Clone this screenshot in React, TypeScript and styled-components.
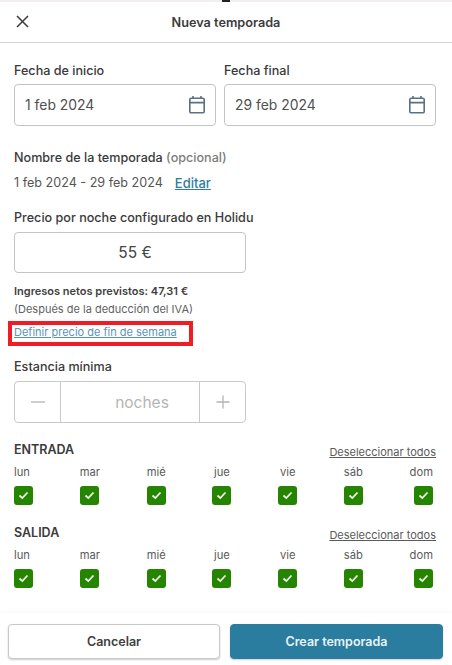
import React, { FC } from 'react';
import styled, { createGlobalStyle } from 'styled-components';

const GlobalStyle = createGlobalStyle`
  html, body {
    margin: 0;
    padding: 0;
    background: #fff;
    font-family: Inter, "Liberation Sans", sans-serif;
    color: #3b3b3b;
  }
  * { box-sizing: border-box; }
`;

const Page = styled.div`
  position: relative;
  width: 452px;
  height: 665px;
  overflow: hidden;
  display: flex;
  flex-direction: column;
`;

const TopStrip = styled.div`
  height: 2px;
  background: #f3eeee;
  display: flex;
  justify-content: center;
  & > span {
    width: 8px;
    height: 2px;
    margin-right: 1px;
    background: #222;
  }
`;

const Header = styled.header`
  position: relative;
  height: 41px;
  flex: none;
  display: flex;
  align-items: center;
  justify-content: center;
  border-bottom: 1px solid #d4d4d4;
  font-size: 12.7px;
  font-weight: 600;
  color: #3c3c3c;
  & > svg {
    position: absolute;
    left: 15px;
    top: 12px;
  }
`;

const Body = styled.main`
  flex: 1;
  padding: 20px 16px 0 14px;
`;

const DateRow = styled.div`
  display: flex;
  gap: 8px;
`;

const DateField = styled.div<{ $width: number }>`
  width: ${(p) => p.$width}px;
`;

const Label = styled.div`
  font-size: 12.6px;
  font-weight: 500;
  line-height: 16px;
  color: #3a3a3a;
`;

const DateBox = styled.div`
  margin-top: 5px;
  height: 42px;
  border: 1px solid #c4c4c4;
  border-radius: 4px;
  padding: 0 9px 0 10px;
  display: flex;
  align-items: center;
  justify-content: space-between;
  font-size: 13.9px;
  color: #4f4f4f;
`;

const NameBlock = styled.section`
  margin-top: 24px;
`;

const Muted = styled.span`
  color: #7d7d7d;
`;

const NameRow = styled.div`
  margin-top: 9px;
  display: flex;
  gap: 12px;
  font-size: 12.6px;
  line-height: 16px;
  color: #555;
`;

const EditLink = styled.a`
  color: #2a7d9f;
  font-size: 13px;
  font-weight: 500;
  text-decoration: underline;
`;

const PriceBlock = styled.section`
  margin-top: 19px;
`;

const PriceBox = styled.div`
  margin-top: 6px;
  width: 232px;
  height: 41px;
  border: 1px solid #c4c4c4;
  border-radius: 4px;
  padding-left: 10px;
  display: flex;
  align-items: center;
  justify-content: center;
  font-size: 15.5px;
  color: #444;
`;

const NetIncome = styled.div`
  margin-top: 11px;
  font-size: 11px;
  font-weight: 600;
  line-height: 14px;
  color: #3f3f3f;
`;

const TaxNote = styled.div`
  margin-top: 4px;
  font-size: 11px;
  line-height: 14px;
  color: #5f5f5f;
`;

const Highlight = styled.div`
  margin: 5px 0 0 -6px;
  width: 185px;
  height: 25px;
  border: 4px solid #ee1c25;
  padding-left: 2px;
  font-size: 11px;
  line-height: 15px;
`;

const WeekendLink = styled.a`
  color: #5b94b3;
  text-decoration: underline;
`;

const StayBlock = styled.section`
  margin-top: 13px;
`;

const Stepper = styled.div`
  margin-top: 6px;
  width: 232px;
  height: 42px;
  border: 1px solid #c9c9c9;
  border-radius: 4px;
  display: grid;
  grid-template-columns: 45px 1fr 45px;
  align-items: stretch;
`;

const StepButton = styled.div`
  display: flex;
  align-items: center;
  justify-content: center;
  color: #b4b4b4;
`;

const StepValue = styled.div`
  border-left: 1px solid #c9c9c9;
  border-right: 1px solid #c9c9c9;
  display: flex;
  align-items: center;
  justify-content: center;
  padding-left: 24px;
  font-size: 15.5px;
  color: #b5b5b5;
`;

const DaysBlock = styled.section<{ $top: number }>`
  margin-top: ${(p) => p.$top}px;
  width: 422px;
`;

const DaysHeader = styled.div`
  display: flex;
  justify-content: space-between;
  align-items: flex-start;
`;

const DaysTitle = styled.div`
  font-size: 12.5px;
  font-weight: 600;
  line-height: 16px;
  color: #3b3b3b;
`;

const ClearLink = styled.a`
  margin-top: 2px;
  font-size: 11px;
  line-height: 16px;
  color: #5a5a5a;
  text-decoration: underline;
`;

const DaysRow = styled.div`
  margin-top: 4px;
  display: flex;
  justify-content: space-between;
  padding-right: 3px;
`;

const DayColumn = styled.div<{ $align: string }>`
  display: flex;
  flex-direction: column;
  align-items: ${(p) => p.$align};
  gap: 6px;
`;

const DayName = styled.span`
  font-size: 11.2px;
  line-height: 16px;
  color: #5a5a5a;
`;

const CheckBox = styled.div`
  width: 19px;
  height: 19px;
  border-radius: 3px;
  background: #268500;
  display: flex;
  align-items: center;
  justify-content: center;
`;

const Footer = styled.footer`
  flex: none;
  height: 52px;
  padding: 11px 9px 0 8px;
  display: grid;
  grid-template-columns: 212px 213px;
  justify-content: space-between;
  box-shadow: 0 -2px 3px rgba(0, 0, 0, 0.025);
`;

const FooterButton = styled.button<{ $primary?: boolean }>`
  height: 35px;
  border-radius: 4px;
  border: 1px solid ${(p) => (p.$primary ? '#2a7d9f' : '#c9c9c4')};
  background: ${(p) => (p.$primary ? '#2a7d9f' : '#fff')};
  color: ${(p) => (p.$primary ? '#e8f2f6' : '#404040')};
  font-family: inherit;
  font-size: 12.5px;
  font-weight: 600;
  box-shadow: 0 1px 2px rgba(0, 0, 0, 0.2);
`;

const CalendarIcon: FC = () => (
  <svg width="18" height="20" viewBox="0 0 18 20" fill="none" stroke="#5a7085" strokeWidth="1.6">
    <rect x="1.8" y="3.2" width="14.4" height="14.6" rx="1.4" />
    <path d="M1.8 7.6h14.4M5 1v3M13 1v3" />
  </svg>
);

const CloseIcon: FC = () => (
  <svg width="15" height="15" viewBox="0 0 15 15" fill="none" stroke="#3a3a3a" strokeWidth="1.5">
    <path d="M2 2l11 11M13 2L2 13" />
  </svg>
);

const CheckIcon: FC = () => (
  <svg width="11" height="9" viewBox="0 0 11 9" fill="none" stroke="#eef7ea" strokeWidth="1.8">
    <path d="M1.5 4.5l2.8 2.6 5.2-5.6" />
  </svg>
);

const days = ['lun', 'mar', 'mié', 'jue', 'vie', 'sáb', 'dom'];

const alignFor = (i: number) =>
  i === 0 ? 'flex-start' : i === days.length - 1 ? 'flex-end' : 'center';

const DayPicker: FC<{ title: string; top: number }> = ({ title, top }) => (
  <DaysBlock $top={top}>
    <DaysHeader>
      <DaysTitle>{title}</DaysTitle>
      <ClearLink>Deseleccionar todos</ClearLink>
    </DaysHeader>
    <DaysRow>
      {days.map((d, i) => (
        <DayColumn key={d} $align={alignFor(i)}>
          <DayName>{d}</DayName>
          <CheckBox>
            <CheckIcon />
          </CheckBox>
        </DayColumn>
      ))}
    </DaysRow>
  </DaysBlock>
);

export default function App() {
  return (
    <Page>
      <GlobalStyle />
      <TopStrip>
        <span />
      </TopStrip>
      <Header>
        <CloseIcon />
        Nueva temporada
      </Header>
      <Body>
        <DateRow>
          <DateField $width={202}>
            <Label>Fecha de inicio</Label>
            <DateBox>
              1 feb 2024
              <CalendarIcon />
            </DateBox>
          </DateField>
          <DateField $width={212}>
            <Label>Fecha final</Label>
            <DateBox>
              29 feb 2024
              <CalendarIcon />
            </DateBox>
          </DateField>
        </DateRow>
        <NameBlock>
          <Label>
            Nombre de la temporada <Muted>(opcional)</Muted>
          </Label>
          <NameRow>
            <span>1 feb 2024 - 29 feb 2024</span>
            <EditLink>Editar</EditLink>
          </NameRow>
        </NameBlock>
        <PriceBlock>
          <Label>Precio por noche configurado en Holidu</Label>
          <PriceBox>55 €</PriceBox>
          <NetIncome>Ingresos netos previstos: 47,31 €</NetIncome>
          <TaxNote>(Después de la deducción del IVA)</TaxNote>
          <Highlight>
            <WeekendLink>Definir precio de fin de semana</WeekendLink>
          </Highlight>
        </PriceBlock>
        <StayBlock>
          <Label>Estancia mínima</Label>
          <Stepper>
            <StepButton>
              <svg width="16" height="16" viewBox="0 0 16 16" stroke="currentColor" strokeWidth="1.3">
                <path d="M1 8h14" />
              </svg>
            </StepButton>
            <StepValue>noches</StepValue>
            <StepButton>
              <svg width="16" height="16" viewBox="0 0 16 16" stroke="currentColor" strokeWidth="1.3">
                <path d="M1.5 8h13M8 1.5v13" />
              </svg>
            </StepButton>
          </Stepper>
        </StayBlock>
        <DayPicker title="ENTRADA" top={19} />
        <DayPicker title="SALIDA" top={20} />
      </Body>
      <Footer>
        <FooterButton>Cancelar</FooterButton>
        <FooterButton $primary>Crear temporada</FooterButton>
      </Footer>
    </Page>
  );
}
